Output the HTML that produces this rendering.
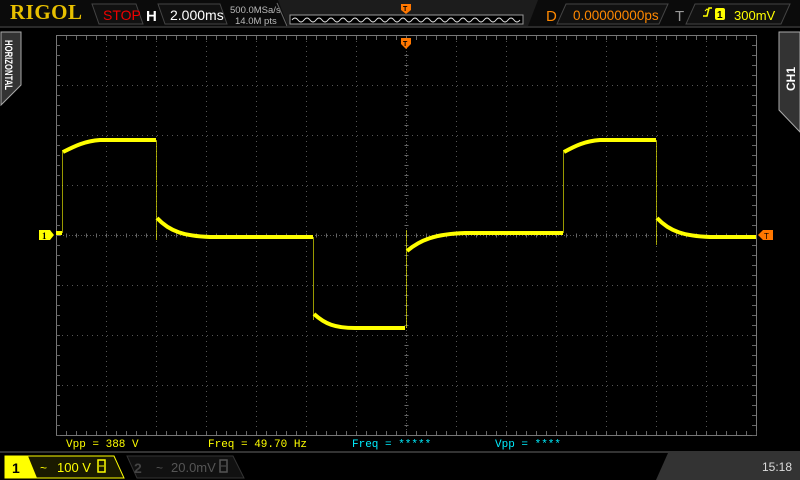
<!DOCTYPE html>
<html><head><meta charset="utf-8"><style>
body{margin:0;width:800px;height:480px;background:#000;overflow:hidden;font-family:"Liberation Sans",sans-serif;position:relative}
.abs{position:absolute}
</style></head><body>
<svg class="abs" style="left:0;top:0" width="800" height="480" xmlns="http://www.w3.org/2000/svg">
<rect x="0" y="0" width="800" height="27" fill="#0b0b0b"/>
<rect x="0" y="26" width="800" height="2" fill="#2a2a2a"/>
<polygon points="92,4 136,4 143,24 99,24" fill="#111" stroke="#444" stroke-width="1"/>
<text x="103" y="20" fill="#e00" font-size="14" font-family="Liberation Sans">STOP</text>
<text x="146" y="21" fill="#fff" font-size="15" font-weight="bold" font-family="Liberation Sans">H</text>
<polygon points="158,4 220,4 227,24 165,24" fill="#111" stroke="#444"/>
<text x="170" y="20" fill="#fff" font-size="14" font-family="Liberation Sans">2.000ms</text>
<text x="230" y="13" fill="#bbb" font-size="9.5" font-family="Liberation Sans">500.0MSa/s</text>
<text x="235" y="24" fill="#bbb" font-size="9.5" font-family="Liberation Sans">14.0M pts</text>
<polygon points="278,0 538,0 528,26 288,26" fill="#1c1c1c"/>
<polyline points="277,3 287,26" stroke="#666" fill="none"/>
<rect x="290" y="15" width="233" height="9" fill="#000" stroke="#999"/>
<path d="M292 20 q3 -4 6 0 t6 0 t6 0 t6 0 t6 0 t6 0 t6 0 t6 0 t6 0 t6 0 t6 0 t6 0 t6 0 t6 0 t6 0 t6 0 t6 0 t6 0 t6 0 t6 0 t6 0 t6 0 t6 0 t6 0 t6 0 t6 0 t6 0 t6 0 t6 0 t6 0 t6 0 t6 0 t6 0 t6 0 t6 0 t6 0 t6 0 t6 0" stroke="#ddd" fill="none" stroke-width="1"/>
<path d="M401 4 h10 v6 l-5 4 l-5 -4z" fill="#f70"/>
<text x="403" y="11" fill="#000" font-size="7" font-weight="bold">T</text>
<text x="546" y="21" fill="#f80" font-size="15" font-family="Liberation Sans">D</text>
<polygon points="566,4 668,4 659,24 557,24" fill="#111" stroke="#444"/>
<text x="573" y="20" fill="#f80" font-size="13.5" font-family="Liberation Sans">0.00000000ps</text>
<text x="675" y="21" fill="#999" font-size="15" font-family="Liberation Sans">T</text>
<polygon points="695,4 790,4 781,24 686,24" fill="#111" stroke="#444"/>
<path d="M703 16 h4 l2 -8 h3" stroke="#ff0" fill="none" stroke-width="1.5"/>
<path d="M705 11 l2 -2 l2 2" stroke="#ff0" fill="none"/>
<rect x="715" y="8" width="10" height="12" rx="2" fill="#ff0"/>
<text x="717" y="18" fill="#000" font-size="10" font-weight="bold">1</text>
<text x="734" y="20" fill="#ff0" font-size="13" font-family="Liberation Sans">300mV</text>
<polygon points="1,32 21,32 21,85 1,105" fill="#333" stroke="#aaa" stroke-width="1"/>
<text transform="translate(5,40) rotate(90)" fill="#fff" font-size="11" font-weight="bold" font-family="Liberation Sans" textLength="50" lengthAdjust="spacingAndGlyphs">HORIZONTAL</text>
<polygon points="779,32 800,32 800,132 779,110" fill="#333" stroke="#aaa" stroke-width="1"/>
<text transform="translate(795,91) rotate(-90)" fill="#fff" font-size="12" font-weight="bold" font-family="Liberation Sans">CH1</text>
<rect x="56.5" y="35.5" width="700" height="400" fill="none" stroke="#777"/>
<g stroke="#555" stroke-width="1" stroke-dasharray="1,4">
<line x1="106.5" y1="36" x2="106.5" y2="435"/><line x1="156.5" y1="36" x2="156.5" y2="435"/><line x1="206.5" y1="36" x2="206.5" y2="435"/><line x1="256.5" y1="36" x2="256.5" y2="435"/><line x1="306.5" y1="36" x2="306.5" y2="435"/><line x1="356.5" y1="36" x2="356.5" y2="435"/><line x1="456.5" y1="36" x2="456.5" y2="435"/><line x1="506.5" y1="36" x2="506.5" y2="435"/><line x1="556.5" y1="36" x2="556.5" y2="435"/><line x1="606.5" y1="36" x2="606.5" y2="435"/><line x1="656.5" y1="36" x2="656.5" y2="435"/><line x1="706.5" y1="36" x2="706.5" y2="435"/>
<line x1="57" y1="85.5" x2="756" y2="85.5"/><line x1="57" y1="135.5" x2="756" y2="135.5"/><line x1="57" y1="185.5" x2="756" y2="185.5"/><line x1="57" y1="285.5" x2="756" y2="285.5"/><line x1="57" y1="335.5" x2="756" y2="335.5"/><line x1="57" y1="385.5" x2="756" y2="385.5"/>
<line x1="406.5" y1="36" x2="406.5" y2="435" stroke-dasharray="1,2"/>
<line x1="57" y1="235.5" x2="756" y2="235.5" stroke-dasharray="1,2"/>
</g>
<g fill="none" stroke="#666" stroke-dasharray="1,9">
<line x1="66" y1="38" x2="757" y2="38" stroke-width="4"/>
<line x1="66" y1="433" x2="757" y2="433" stroke-width="4"/>
<line x1="58" y1="45" x2="58" y2="436" stroke-width="4"/>
<line x1="754" y1="45" x2="754" y2="436" stroke-width="4"/>
<line x1="66" y1="235.5" x2="757" y2="235.5" stroke-width="4"/>
<line x1="406.5" y1="45" x2="406.5" y2="436" stroke-width="4" transform="rotate(0)"/>
</g>
<g fill="none" stroke="#ff0" stroke-width="1" opacity="0.6">
<line x1="62.5" y1="233" x2="62.5" y2="150"/>
<line x1="156.5" y1="140" x2="156.5" y2="240"/>
<line x1="313.5" y1="237" x2="313.5" y2="320"/>
<line x1="406.5" y1="328" x2="406.5" y2="230"/>
<line x1="563.5" y1="233" x2="563.5" y2="150"/>
<line x1="656.5" y1="140" x2="656.5" y2="245"/>
</g>
<path d="M56 233 H62 M63 152 C75 146 85 141 100 140 H156 M157 218 C170 232 185 236 210 237 H313 M314 314 C325 324 335 328 355 328 H405 M407 251 C420 240 435 234 465 233 H563 M564 152 C575 146 585 141 600 140 H656 M657 218 C670 232 685 236 710 237 H756" fill="none" stroke="#ff0" stroke-width="4"/>
<rect x="39" y="230" width="11" height="10" fill="#ff0"/><path d="M50 230 l4 5 l-4 5z" fill="#ff0"/>
<text x="42" y="239" font-size="9" font-weight="bold" fill="#000" font-family="Liberation Serif">1</text>
<path d="M758 235 l5 -5 h10 v10 h-10z" fill="#f70"/>
<text x="764" y="239" font-size="8" fill="#000">T</text>
<path d="M401 38 h10 v6 l-5 5 l-5 -5z" fill="#f70"/>
<text x="403" y="46" font-size="7" font-weight="bold" fill="#000">T</text>
<g font-family="Liberation Mono" font-size="11">
<text x="66" y="447" fill="#ff0">Vpp = 388 V</text>
<text x="208" y="447" fill="#ff0">Freq = 49.70 Hz</text>
<text x="352" y="447" fill="#0ef">Freq = *****</text>
<text x="495" y="447" fill="#0ef">Vpp = ****</text>
</g>
<rect x="0" y="451" width="800" height="2" fill="#333"/>
<rect x="0" y="453" width="800" height="27" fill="#000"/>
<polygon points="668,453 800,453 800,480 656,480" fill="#333"/>
<text x="762" y="471" fill="#ddd" font-size="12" font-family="Liberation Sans">15:18</text>
<polygon points="5,456 114,456 124,478 5,478" fill="#1a1a00" stroke="#ff0"/>
<polygon points="5,456 28,456 37,478 5,478" fill="#ff0"/>
<text x="12" y="473" fill="#000" font-size="14" font-weight="bold">1</text>
<text x="40" y="472" fill="#ff0" font-size="12">~</text>
<text x="57" y="472" fill="#ff0" font-size="13">100 V</text>
<rect x="98" y="460" width="7" height="12" fill="none" stroke="#ff0" stroke-width="1.5"/><line x1="99" y1="466" x2="104" y2="466" stroke="#ff0"/>
<polygon points="127,456 233,456 244,478 137,478" fill="#111" stroke="#333"/>
<text x="134" y="473" fill="#444" font-size="14" font-weight="bold">2</text>
<text x="156" y="472" fill="#555" font-size="12">~</text>
<text x="171" y="472" fill="#555" font-size="13">20.0mV</text>
<rect x="220" y="460" width="7" height="12" fill="none" stroke="#555" stroke-width="1.5"/><line x1="221" y1="466" x2="226" y2="466" stroke="#555"/>
</svg>
<div class="abs" style="left:10px;top:0px;font-family:'Liberation Serif',serif;font-weight:bold;font-size:21px;color:#e8c000;letter-spacing:0.5px">RIGOL</div>
</body></html>
